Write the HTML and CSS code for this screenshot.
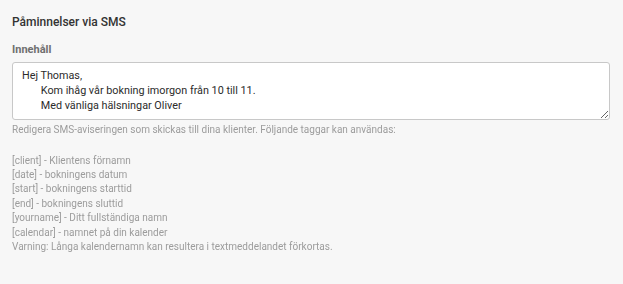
FILE: index.html
```html
<!DOCTYPE html>
<html lang="sv">
<head>
<meta charset="utf-8">
<link rel="stylesheet" href="styles.css">
</head>
<body>
<div class="panel">
  <h3 class="title">Påminnelser via SMS</h3>
  <label class="label" for="sms">Innehåll</label>
  <textarea id="sms" class="input">Hej Thomas,
	Kom ihåg vår bokning imorgon från 10 till 11.
	Med vänliga hälsningar Oliver</textarea>
  <p class="help">Redigera SMS-aviseringen som skickas till dina klienter. Följande taggar kan användas:</p>
  <ul class="tags">
    <li>[client] - Klientens förnamn</li>
    <li>[date] - bokningens datum</li>
    <li>[start] - bokningens starttid</li>
    <li>[end] - bokningens sluttid</li>
    <li>[yourname] - Ditt fullständiga namn</li>
    <li>[calendar] - namnet på din kalender</li>
    <li>Varning: Långa kalendernamn kan resultera i textmeddelandet förkortas.</li>
  </ul>
</div>
<script src="script.js"></script>
</body>
</html>
```
FILE: styles.css
```css
html, body {
  margin: 0;
  padding: 0;
  background: #f7f7f7;
  font-family: Roboto, "Liberation Sans", sans-serif;
}
.panel {
  padding: 14px 13px 0 12px;
  display: flex;
  flex-direction: column;
}
.title {
  margin: 0;
  font-size: 12px;
  font-weight: 500;
  color: #333;
  line-height: 16px;
}
.label {
  margin-top: 12px;
  font-size: 11px;
  font-weight: 700;
  color: #6f6f6f;
  line-height: 16px;
}
.input {
  margin-top: 4px;
  height: 58px;
  box-sizing: border-box;
  border: 1px solid #c8c8c8;
  border-radius: 3px;
  background: #fff;
  padding: 5px 9px;
  font-family: Roboto, "Liberation Sans", sans-serif;
  font-size: 10.8px;
  line-height: 15.2px;
  color: #2b2b2b;
  caret-color: #000;
  tab-size: 7;
  resize: vertical;
}
.input:focus {
  outline: none;
}
.help {
  margin: 3px 0 0;
  font-size: 10px;
  line-height: 14.5px;
  color: #9c9c9c;
}
.tags {
  list-style: none;
  margin: 16px 0 0;
  padding: 0;
  font-size: 10px;
  line-height: 14.4px;
  color: #9c9c9c;
}
```
FILE: script.js
```js
var ta = document.getElementById('sms');
ta.focus();
ta.setSelectionRange(ta.value.length, ta.value.length);
```
